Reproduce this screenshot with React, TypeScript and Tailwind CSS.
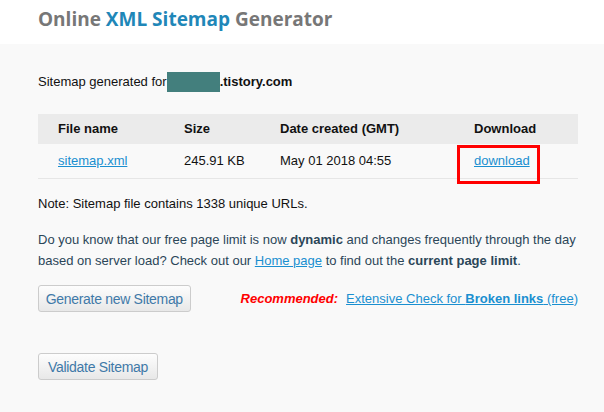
import React from 'react';

const sans = "font-['Liberation_Sans',Arial,sans-serif]";

const Button: React.FC<{ children: React.ReactNode; className?: string }> = ({ children, className }) => (
  <button
    className={`h-[27px] rounded-[3px] border border-[#cccccc] bg-gradient-to-b from-[#fdfdfd] to-[#e8e8e8] text-[14px] tracking-[-0.3px] text-[#3f79a8] leading-none whitespace-nowrap ${className ?? ''}`}
  >
    {children}
  </button>
);

export default function App() {
  return (
    <div className={`w-[604px] h-[412px] overflow-hidden bg-[#f9f9f9] ${sans}`}>
      {/* Header */}
      <div className="h-[44px] bg-white pl-[38px] pt-[6px]">
        <h1 className="font-['Open_Sans',sans-serif] font-bold text-[19px] leading-[26px] text-[#777777]">
          Online <span className="text-[#1f87b8]">XML Sitemap</span> Generator
        </h1>
      </div>

      <div className="pl-[38px] w-[578px]">
        <p className="mt-[28px] text-[13px] leading-[16px] text-[#111] flex items-center">
          Sitemap generated for
          <span className="inline-block w-[53px] h-[20px] bg-[#437f7d]" />
          <b>.tistory.com</b>
        </p>

        {/* Table */}
        <div className="mt-[22px] text-[13px] text-[#111]">
          <div className="grid grid-cols-[126px_96px_194px_1fr] h-[30px] items-center bg-[#ebebeb] font-bold">
            <div className="pl-5">File name</div>
            <div className="pl-5">Size</div>
            <div className="pl-5">Date created (GMT)</div>
            <div className="pl-5">Download</div>
          </div>
          <div className="grid grid-cols-[126px_96px_194px_1fr] h-[35px] items-center border-b border-[#e6e6e6]">
            <div className="pl-5">
              <a href="#" className="text-[#1a8fd0] underline">sitemap.xml</a>
            </div>
            <div className="pl-5">245.91 KB</div>
            <div className="pl-5">May 01 2018 04:55</div>
            <div className="pl-5 relative h-full flex items-center">
              <a href="#" className="text-[#1a8fd0] underline">download</a>
              <div className="absolute left-[3px] top-[1px] w-[83px] h-[39px] border-[3px] border-[#ff0000]" />
            </div>
          </div>
        </div>

        <p className="mt-[17px] text-[13px] leading-[16px] text-[#111]">
          Note: Sitemap file contains 1338 unique URLs.
        </p>

        <p className="mt-[17px] text-[13px] leading-[21px] text-[#2b4658]">
          Do you know that our free page limit is now <b>dynamic</b> and changes frequently through the day
          based on server load? Check out our{' '}
          <a href="#" className="text-[#1a8fd0] underline">Home page</a> to find out the <b>current page limit</b>.
        </p>

        <div className="mt-[14px] flex items-center">
          <Button className="w-[154px]">Generate new Sitemap</Button>
          <span className="ml-[50px] text-[13px] italic font-bold text-[#ff0000] whitespace-nowrap">Recommended:</span>
          <span className="ml-[8px] text-[13px] text-[#1a8fd0] whitespace-nowrap">
            <a href="#" className="underline">
              Extensive Check for <b>Broken links</b> (free
            </a>
            )
          </span>
        </div>

        <div className="mt-[41px]">
          <Button className="w-[120px]">Validate Sitemap</Button>
        </div>
      </div>
    </div>
  );
}
